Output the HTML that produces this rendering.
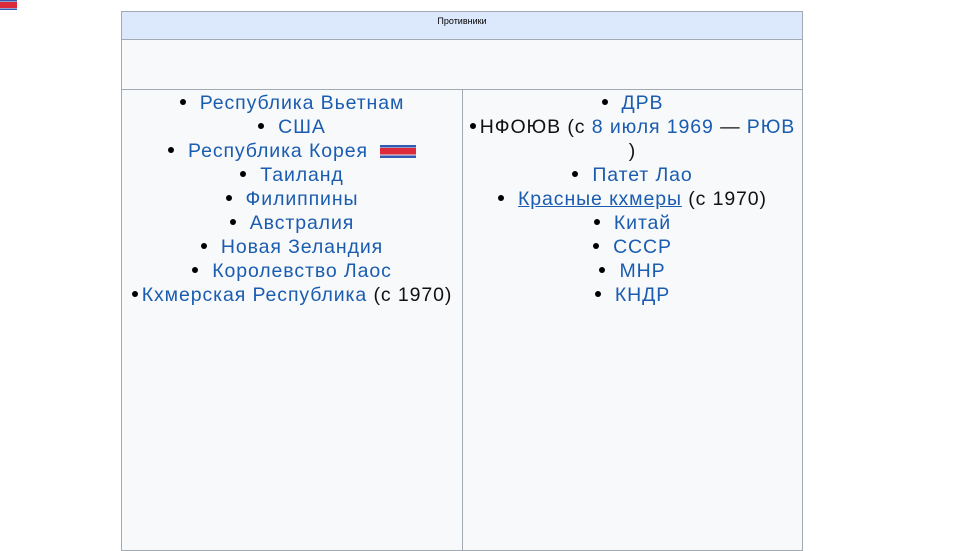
<!DOCTYPE html>
<html><head><meta charset="utf-8"><style>
html,body{margin:0;padding:0;background:#fff;width:960px;height:540px;overflow:hidden;font-family:"Liberation Sans",sans-serif;}
.t{position:absolute;left:121px;top:11px;width:682px;border-collapse:collapse;background:#f8f9fa;}
.t td{border:1px solid #a2a9b1;padding:0;text-align:center;vertical-align:top;}
.h{background:#dce8fb;height:27px;font-size:9px;vertical-align:middle!important;}
.h div{margin-top:-9px}
.e{height:49px;}
.c{height:460px;font-size:19.5px;letter-spacing:0.9px;line-height:24px;color:#111;white-space:nowrap}
a{color:#1a5cb0;text-decoration:none}
a.u{text-decoration:underline}
.b{display:inline-block;width:6px;height:6px;border-radius:50%;background:#000;vertical-align:middle;margin-right:14px;position:relative;top:-2px}
.f{display:inline-block;width:36px;height:13px;vertical-align:middle;margin-left:12px;background:linear-gradient(#3558b0 0 18%,#e8e8f0 18% 25%,#dd2a3a 25% 75%,#e8e8f0 75% 82%,#3558b0 82%)}
</style></head><body>
<div style="position:absolute;left:0;top:0;width:17px;height:10px;background:linear-gradient(#3558b0 0 15%,#eee 15% 22%,#dd2a3a 22% 78%,#eee 78% 85%,#3558b0 85%)"></div>
<table class="t">
<tr><td colspan="2" class="h"><div>Противники</div></td></tr>
<tr><td colspan="2" class="e"></td></tr>
<tr>
<td class="c" style="width:340px"><div style="padding-top:1px">
<span class="b"></span><a>Республика Вьетнам</a><br>
<span class="b"></span><a>США</a><br>
<span class="b"></span><a>Республика Корея</a><span class="f"></span><br>
<span class="b"></span><a>Таиланд</a><br>
<span class="b"></span><a>Филиппины</a><br>
<span class="b"></span><a>Австралия</a><br>
<span class="b"></span><a>Новая Зеландия</a><br>
<span class="b"></span><a>Королевство Лаос</a><br>
<span class="b" style="margin-right:4px"></span><a>Кхмерская Республика</a> (с 1970)
</div></td>
<td class="c"><div style="padding-top:1px">
<span class="b"></span><a>ДРВ</a><br>
<span class="b" style="margin-right:4px"></span>НФОЮВ (с <a>8 июля 1969</a> — <a>РЮВ</a><br>)<br>
<span class="b"></span><a>Патет Лао</a><br>
<span class="b"></span><a class="u">Красные кхмеры</a> (с 1970)<br>
<span class="b"></span><a>Китай</a><br>
<span class="b"></span><a>СССР</a><br>
<span class="b"></span><a>МНР</a><br>
<span class="b"></span><a>КНДР</a>
</div></td>
</tr>
</table>
</body></html>
